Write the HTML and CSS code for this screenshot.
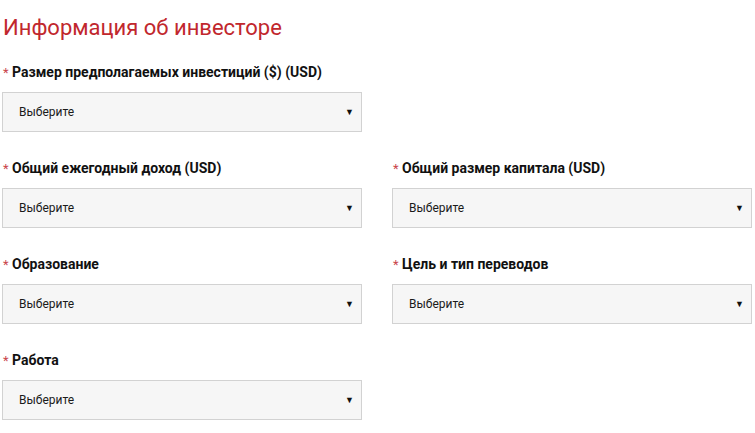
FILE: index.html
```html
<!DOCTYPE html>
<html lang="ru">
<head>
<meta charset="utf-8">
<title>Информация об инвесторе</title>
<link rel="stylesheet" href="styles.css">
</head>
<body>
<div class="form">
  <h2 class="title">Информация об инвесторе</h2>
  <div class="grid">
    <div class="field">
      <div class="label"><span class="req">*</span> Размер предполагаемых инвестиций ($) (USD)</div>
      <div class="select"><span>Выберите</span><span class="arrow">▼</span></div>
    </div>
    <div class="field empty"></div>
    <div class="field">
      <div class="label"><span class="req">*</span> Общий ежегодный доход (USD)</div>
      <div class="select"><span>Выберите</span><span class="arrow">▼</span></div>
    </div>
    <div class="field">
      <div class="label"><span class="req">*</span> Общий размер капитала (USD)</div>
      <div class="select"><span>Выберите</span><span class="arrow">▼</span></div>
    </div>
    <div class="field">
      <div class="label"><span class="req">*</span> Образование</div>
      <div class="select"><span>Выберите</span><span class="arrow">▼</span></div>
    </div>
    <div class="field">
      <div class="label"><span class="req">*</span> Цель и тип переводов</div>
      <div class="select"><span>Выберите</span><span class="arrow">▼</span></div>
    </div>
    <div class="field">
      <div class="label"><span class="req">*</span> Работа</div>
      <div class="select"><span>Выберите</span><span class="arrow">▼</span></div>
    </div>
  </div>
</div>
</body>
</html>
```
FILE: styles.css
```css
html, body {
  margin: 0;
  padding: 0;
  background: #ffffff;
}
body {
  font-family: Roboto, "Liberation Sans", Arial, sans-serif;
  color: #111111;
}
.form {
  padding: 0 0 0 2px;
}
.title {
  margin: 0;
  padding: 14px 0 0 1px;
  font-size: 22px;
  line-height: 28px;
  font-weight: 400;
  color: #c1272d;
}
.grid {
  display: grid;
  grid-template-columns: 360px 360px;
  column-gap: 30px;
  row-gap: 27px;
  margin-top: 21px;
}
.label {
  height: 18px;
  overflow: hidden;
  font-size: 14px;
  font-weight: 700;
  line-height: 18px;
  margin-bottom: 11px;
  padding-left: 1px;
  color: #111111;
  white-space: nowrap;
}
.req {
  color: #c9454a;
  font-weight: 400;
  font-size: 13px;
  line-height: 1;
}
.select {
  box-sizing: border-box;
  height: 40px;
  border: 1px solid #d2d2d2;
  background: #f6f6f6;
  display: flex;
  align-items: center;
  justify-content: space-between;
  padding: 0 7px 0 16px;
  font-size: 12px;
  color: #1a1a1a;
}
.arrow {
  font-size: 9px;
  color: #111111;
}
```
